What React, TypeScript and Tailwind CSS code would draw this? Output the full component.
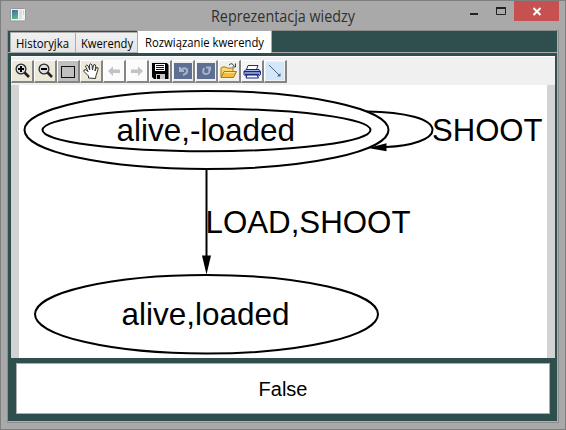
import React from "react";

const edge = "#2a2a2a";

function Lens({ plus }: { plus?: boolean }) {
  return (
    <>
      <rect width="20" height="20" fill="#ece9d8" />
      <path d="M12.500 11.500L17 16" stroke="#222" strokeWidth="2.600" />
      <circle cx="9" cy="8" r="4.900" fill="#dcdce4" stroke={edge} strokeWidth="1.300" />
      <path d="M6 8h6" stroke="#000" strokeWidth="2" />
      {plus && <path d="M9 5v6" stroke="#000" strokeWidth="2" />}
    </>
  );
}

function Arrow({ flip }: { flip?: boolean }) {
  return (
    <>
      <rect width="20" height="20" fill="#fbfbfb" />
      <path
        d="M4 10l5-4.500v3h7v3.500H9v3z"
        fill="#c2c2c2"
        transform={flip ? "translate(20 0) scale(-1 1)" : undefined}
      />
    </>
  );
}

function Turn({ redo }: { redo?: boolean }) {
  return (
    <>
      <rect x="1" y="2" width="18" height="16" fill="#5d7093" />
      {redo ? (
        <path d="M8 7q-2.500 6 2 6q4.500 0 3-5.500M10 6.500h4v3" fill="none" stroke="#a9b4c9" strokeWidth="2" />
      ) : (
        <path d="M7 6v4h4M7.500 9.500q4-4 6.500-1q1 4-4 5.500" fill="none" stroke="#a9b4c9" strokeWidth="2" />
      )}
    </>
  );
}

const tools: React.ReactNode[] = [
  <Lens plus />,
  <Lens />,
  <>
    <rect width="20" height="20" fill="#c0c0c0" />
    <rect x="3.500" y="5.500" width="13" height="11" fill="#c0c0c0" stroke="#111" />
  </>,
  <>
    <rect width="20" height="20" fill="#ece9d8" />
    <path
      d="M7.500 17v-2L3 10.500V9l2-.3 2 2L4.500 5l1.200-1 1.500 1 1.500 4L8.500 4l1-1.300L11 4l.5 5 1-5 1.500-.5.8 1.500-.8 5 1.500-3.500 1.500.3v1.700l-2 6-.5 3z"
      fill="#fff"
      stroke="#333"
      strokeWidth="1"
    />
  </>,
  <Arrow />,
  <Arrow flip />,
  <>
    <rect width="20" height="20" fill="#eeeeee" />
    <path d="M2 2h15l1.500 2v14H4l-2-2z" fill="#000" />
    <path d="M5 3h10v7H5z" fill="#fff" />
    <path d="M6 4.500h8M6 6.500h8M6 8.500h8" stroke="#111" />
    <path d="M6 13h9v5H6z" fill="#c6c6c6" />
    <path d="M7 14h3v4H7z" fill="#000" />
  </>,
  <Turn />,
  <Turn redo />,
  <>
    <rect width="20" height="20" fill="#f0f0ec" />
    <path d="M2 16V7l1-1h4l1 1h6v3" fill="#f8d973" stroke="#a87c18" />
    <path d="M2 16.500l3-6h12.500l-3 6z" fill="#f5bd39" stroke="#a87c18" />
    <path d="M5.500 11.500h10" stroke="#ffe899" />
    <path d="M10 4q3-3 5 1M16.500 2.500v3.500h-3" fill="none" stroke="#2c3c58" />
  </>,
  <>
    <rect width="20" height="20" fill="#f5f5f5" />
    <path d="M6 4.500h10l-1.500 4H4.500z" fill="#fff" stroke="#203080" />
    <path d="M4 8.500h13l1.500 2v3l-2 1.500H3.500L2 13.500v-3z" fill="#a8b6e5" stroke="#19277d" />
    <path d="M2 10.700h16M3 13.300h14" stroke="#19277d" strokeWidth="1.300" />
    <path d="M5 14h10l1.500 3H4z" fill="#f5f7ff" stroke="#19277d" />
  </>,
  <>
    <rect x="1" y="1" width="18" height="18" fill="#d3e7fb" />
    <path d="M4 4l10.500 10.500" stroke="#53677d" />
    <path d="M15.500 12v3.500H12z" fill="#53677d" />
  </>,
];

function TitleBar() {
  return (
    <header className="relative flex h-[29px] shrink-0 items-center justify-center">
      <svg className="absolute left-[9px] top-[7px]" width="16" height="14">
        <defs>
          <linearGradient id="pane" x2=".3" y2="1">
            <stop stopColor="#416ba5" />
            <stop offset="1" stopColor="#56b58b" />
          </linearGradient>
        </defs>
        <rect x=".5" y=".5" width="15" height="12.500" rx="1" fill="#f2f2f2" stroke="#969696" />
        <rect x="2" y="2" width="6" height="9" fill="url(#pane)" />
        <rect x="9" y="2" width="3" height="9" fill="#dedede" />
        <rect x="13" y="2" width="1" height="5" fill="#c7d8d3" />
      </svg>
      <h1 className="font-['Open_Sans',sans-serif]">
        <svg width="146" height="28" className="block overflow-visible">
          <text x="1" y="19.500" fill="#303030" fontSize="15.500" textLength="144" lengthAdjust="spacingAndGlyphs">
            Reprezentacja wiedzy
          </text>
        </svg>
      </h1>
      <div className="absolute right-[6px] top-0 flex h-5">
        <svg width="45" height="20">
          <path d="M1 13h8" stroke="#222" strokeWidth="2" />
          <path d="M27.500 7.500h9v6h-9z" fill="none" stroke="#222" />
          <path d="M27 7h10" stroke="#222" strokeWidth="2" />
        </svg>
        <svg width="45" height="20" className="bg-[#c75050]">
          <path d="M19.500 7l7 7M26.500 7l-7 7" stroke="#fff" strokeWidth="2" />
        </svg>
      </div>
    </header>
  );
}

function Label({ text, width }: { text: string; width: number }) {
  return (
    <svg width={width + 4} height="18" className="block overflow-visible">
      <text x="1" y="14" fontSize="12" fill="#000" textLength={width} lengthAdjust="spacingAndGlyphs">
        {text}
      </text>
    </svg>
  );
}

function Tabs() {
  return (
    <nav className="flex h-[22px] shrink-0 items-end border-b border-[#acacac] pl-[2px] font-['Open_Sans',sans-serif]">
      <div className="h-5 w-[65px] border-l border-t border-[#acacac] bg-gradient-to-b from-[#f0f0f0] to-[#e5e5e5] pl-[4px] pt-[1px]">
        <Label text="Historyjka" width={53} />
      </div>
      <div className="h-5 w-[62px] border-l border-t border-[#acacac] bg-gradient-to-b from-[#f0f0f0] to-[#e5e5e5] pl-[4px] pt-[1px]">
        <Label text="Kwerendy" width={52} />
      </div>
      <div className="-mb-px h-[23px] w-[135px] border-x border-t border-[#acacac] bg-white pl-[6px] pt-[2px]">
        <Label text="Rozwiązanie kwerendy" width={119} />
      </div>
    </nav>
  );
}

function Graph() {
  return (
    <svg width="528" height="273" viewBox="19 85 528 273" className="block bg-white font-['Liberation_Sans',Arial,sans-serif]">
      <g fill="none" stroke="#000" strokeWidth="2">
        <ellipse cx="206.500" cy="130" rx="182" ry="39" />
        <ellipse cx="206.500" cy="130" rx="164" ry="21.300" />
        <ellipse cx="206.500" cy="314.300" rx="171.500" ry="39.300" />
        <path d="M367 111.500C405 112 432.500 119 432.500 130C432.500 139 412 146 386 147" />
        <path d="M206.500 169V257" />
      </g>
      <path d="M368 148L386.500 143.300V151.300Z" />
      <path d="M202 255.500H211L206.500 274.500Z" />
      <g fontSize="31.300">
        <text x="116.500" y="140.600" textLength="178.500" lengthAdjust="spacingAndGlyphs">alive,-loaded</text>
        <text x="432" y="140.600" textLength="110.500" lengthAdjust="spacingAndGlyphs">SHOOT</text>
        <text x="205.500" y="232.600" textLength="205" lengthAdjust="spacingAndGlyphs">LOAD,SHOOT</text>
        <text x="121.500" y="325" textLength="168" lengthAdjust="spacingAndGlyphs">alive,loaded</text>
      </g>
    </svg>
  );
}

export default function App() {
  return (
    <div className="flex h-[430px] w-[566px] flex-col overflow-hidden border border-[#7f7f7f] bg-[#a9a9a9]">
      <TitleBar />
      <div className="ml-[6px] flex h-[393px] w-[552px] shrink-0 flex-col border border-[#8d8d8d] bg-[#2f4f4f]">
        <div className="flex h-[391px] flex-col border-b border-r border-[#a9b1b1]">
          <Tabs />
          <main className="ml-[3px] mt-[3px] flex h-[302px] w-[544px] shrink-0 flex-col bg-[#f0f0f0]">
            <div className="flex h-[29px] shrink-0 border-t border-white pt-[3px]">
              {tools.map((icon, i) => (
                <button
                  key={i}
                  className="h-[23px] w-[23px] border-b-2 border-r-2 border-l border-t border-b-[#858585] border-l-white border-r-[#858585] border-t-white bg-[#f0f0f0]"
                >
                  <svg width="20" height="20" className="block">{icon}</svg>
                </button>
              ))}
            </div>
            <div className="flex h-[273px] justify-center bg-[#d3d3d3]">
              <Graph />
            </div>
          </main>
          <div className="ml-2 mt-[5px] flex h-[51px] w-[534px] shrink-0 items-center justify-center border border-[#abadb3] bg-white font-['Liberation_Sans',Arial,sans-serif] text-[20px] leading-none text-black">
            False
          </div>
        </div>
      </div>
    </div>
  );
}
